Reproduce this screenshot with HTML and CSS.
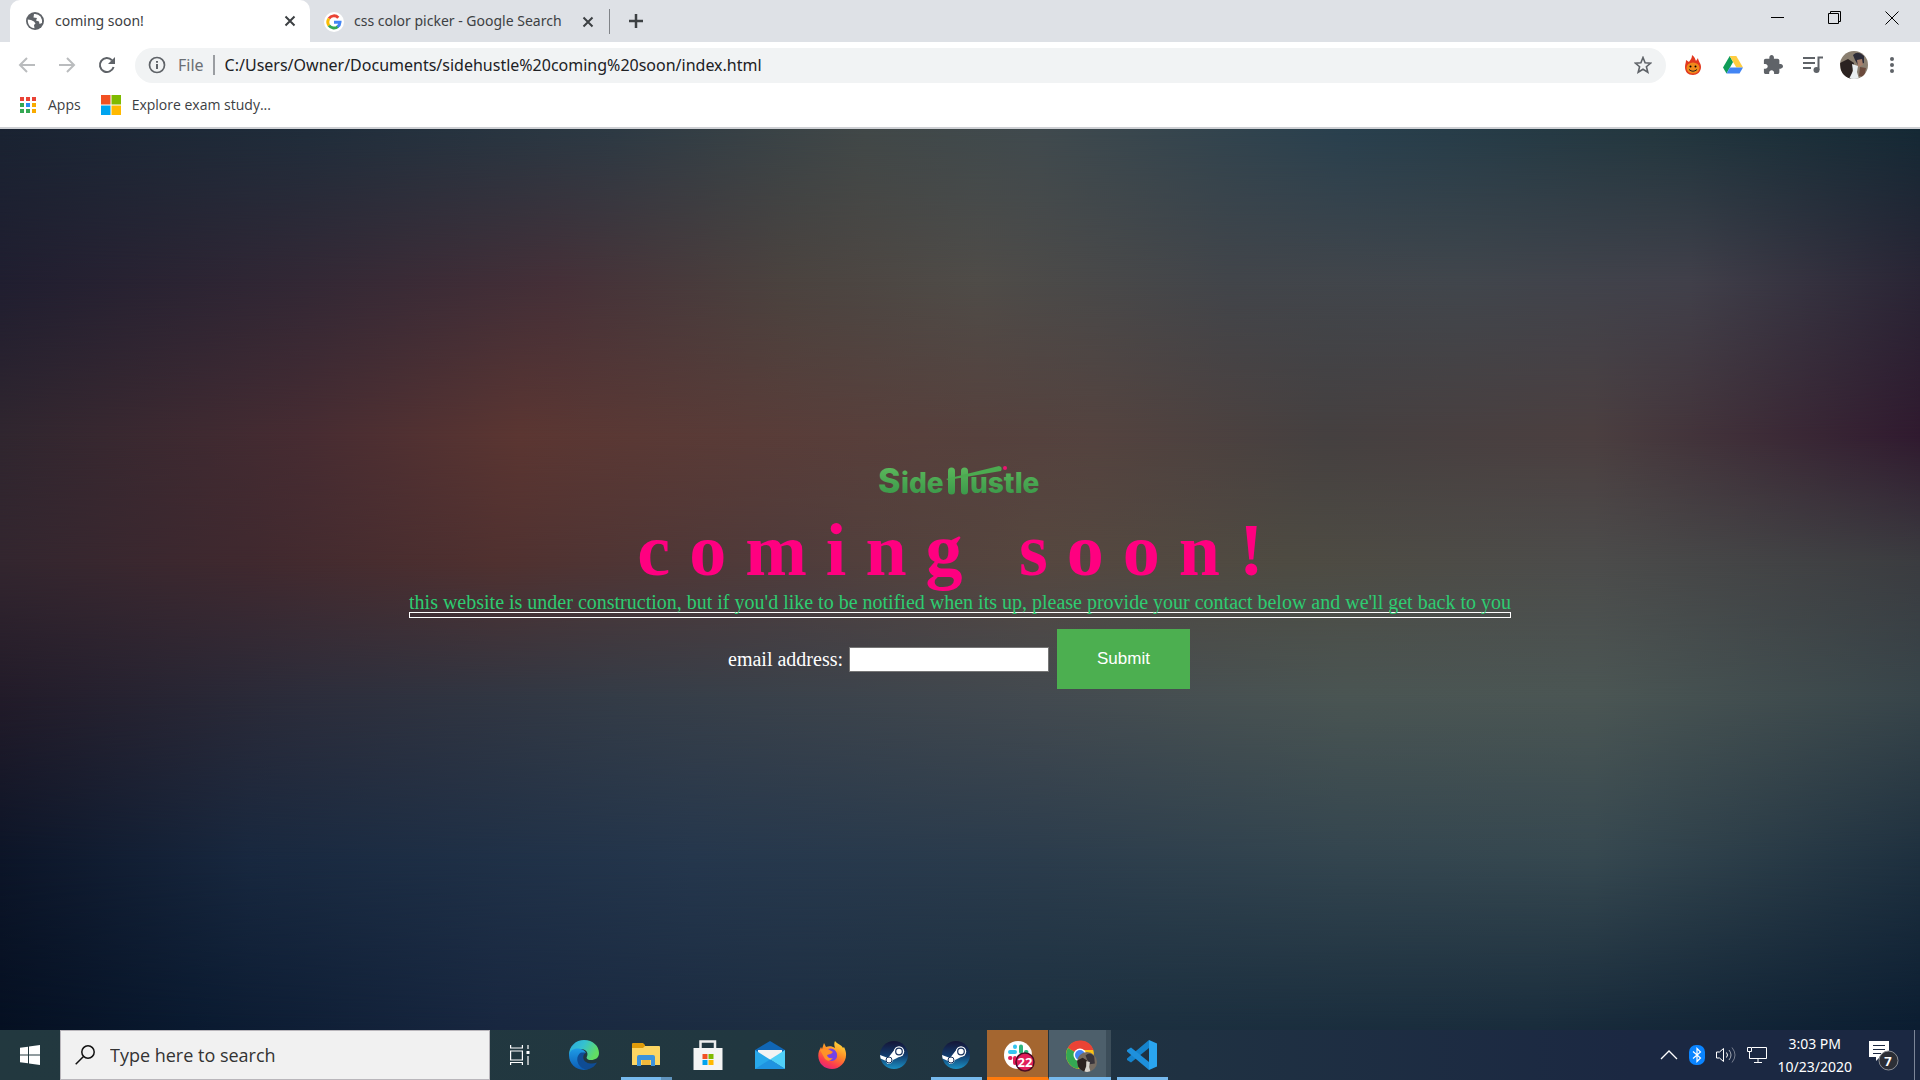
FILE: index.html
```html
<!DOCTYPE html>
<html lang="en">
<head>
<meta charset="utf-8">
<title>coming soon!</title>
<link rel="stylesheet" href="styles.css">
</head>
<body>
<header class="browser">
  <div class="tabstrip">
    <div class="tab tab-active">
      <svg class="icon" width="20" height="20" viewBox="0 0 20 20"><circle cx="10" cy="10" r="9" fill="#5f6368"/><path d="M2.800 8.500 L6 9 L9 10.500 L10.500 12.500 L9 14 L9.500 17.300 C5.500 17 2.500 13.500 2.800 8.500 Z M9 3 Q13 2.500 15.500 5.500 Q17.500 8.500 17 12 L14.500 13 L14 10.500 L11 9.500 L12 7 L8.500 6.500 Z" fill="#fff"/></svg>
      <span class="tab-title">coming soon!</span>
      <button class="plain" aria-label="Close tab"><svg width="12" height="12" viewBox="0 0 12 12"><path d="M1.500 1.500 L10.500 10.500 M10.500 1.500 L1.500 10.500" stroke="#3c4043" stroke-width="2"/></svg></button>
    </div>
    <div class="tab tab-idle">
      <svg class="icon" width="20" height="20" viewBox="0 0 20 20"><circle cx="10" cy="10" r="10" fill="#fff"/><g fill="none" stroke-width="3"><path d="M5 6.500 A6 6 0 0 1 14.300 5.700" stroke="#ea4335"/><path d="M5 13.500 A6 6 0 0 1 5 6.500" stroke="#fbbc05"/><path d="M14 14.500 A6 6 0 0 1 5 13.500" stroke="#34a853"/><path d="M10 10.200 H16 A6 6 0 0 1 13.500 14.800" stroke="#4285f4"/></g></svg>
      <span class="tab-title">css color picker - Google Search</span>
      <button class="plain" aria-label="Close tab"><svg width="12" height="12" viewBox="0 0 12 12"><path d="M1.500 1.500 L10.500 10.500 M10.500 1.500 L1.500 10.500" stroke="#3c4043" stroke-width="2"/></svg></button>
    </div>
    <button class="plain new-tab" aria-label="New tab"><svg width="16" height="16" viewBox="0 0 16 16"><path d="M8 1 V15 M1 8 H15" stroke="#3c4043" stroke-width="2.500"/></svg></button>
    <div class="window-controls">
      <button class="plain" aria-label="Minimize"><svg width="14" height="14" viewBox="0 0 14 14"><path d="M0 6.500 H13" stroke="#000"/></svg></button>
      <button class="plain" aria-label="Restore"><svg width="14" height="14" viewBox="0 0 14 14"><path d="M.5 2.500 H10.500 V12.500 H.5 Z M2.500 2.500 V.5 H12.500 V10.500 H10.500" fill="none" stroke="#000"/></svg></button>
      <button class="plain" aria-label="Close"><svg width="14" height="14" viewBox="0 0 14 14"><path d="M.5 .5 L13.500 13.500 M13.500 .5 L.5 13.500" stroke="#000"/></svg></button>
    </div>
  </div>
  <div class="toolbar">
    <nav class="nav">
      <button class="plain" aria-label="Back"><svg width="18" height="18" viewBox="0 0 18 18"><path d="M17 9 H2 M9 2 L2 9 L9 16" fill="none" stroke="#babcbe" stroke-width="2"/></svg></button>
      <button class="plain" aria-label="Forward"><svg width="18" height="18" viewBox="0 0 18 18"><path d="M1 9 H16 M9 2 L16 9 L9 16" fill="none" stroke="#babcbe" stroke-width="2"/></svg></button>
      <button class="plain" aria-label="Reload"><svg width="18" height="18" viewBox="0 0 18 18"><path d="M15.600 11 A7 7 0 1 1 14 4.200" fill="none" stroke="#5f6368" stroke-width="2"/><path d="M17 1 V8 H10 Z" fill="#5f6368"/></svg></button>
    </nav>
    <div class="omnibox">
      <svg width="18" height="18" viewBox="0 0 18 18"><circle cx="9" cy="9" r="7.500" fill="none" stroke="#5f6368" stroke-width="1.700"/><path d="M9 8 V13 M9 5 V6.800" stroke="#5f6368" stroke-width="2"/></svg>
      <span class="scheme">File</span>
      <input class="url" aria-label="Address" value="C:/Users/Owner/Documents/sidehustle%20coming%20soon/index.html">
      <button class="plain" aria-label="Bookmark this page"><svg width="18" height="18" viewBox="0 0 18 18"><path d="M9 1.500 L11.100 6.700 L16.700 7.100 L12.400 10.700 L13.800 16.200 L9 13.200 L4.200 16.200 L5.600 10.700 L1.300 7.100 L6.900 6.700 Z" fill="none" stroke="#5f6368" stroke-width="1.600"/></svg></button>
    </div>
    <div class="extensions">
      <button class="plain" aria-label="Flame extension"><svg width="20" height="20" viewBox="0 0 20 20"><path d="M9 0 C12 2 12 4 13 6 L15 3 C15 6 18 8 18 12 C18 17 14 20 10 20 C5 20 2 17 2 12 C2 9 3 8 3 5 L6 7 C7 5 9 4 9 0 Z" fill="#e2381f"/><ellipse cx="10" cy="13" rx="6.500" ry="5.500" fill="#f08a1c"/><circle cx="7.500" cy="11.500" r="1"/><circle cx="12.500" cy="11.500" r="1"/><path d="M6 14.500 Q10 18 14 14.500" fill="none" stroke="#222"/></svg></button>
      <button class="plain" aria-label="Drive"><svg width="20" height="20" viewBox="0 0 20 20"><path d="M6.700 1 L0 12.500 L3.500 18.500 L10.100 7 Z" fill="#0f9d58"/><path d="M6.700 1 H13.300 L20 12.500 H13.300 Z" fill="#ffcd40"/><path d="M6.900 12.500 H20 L16.500 18.500 H3.500 Z" fill="#4285f4"/></svg></button>
      <button class="plain" aria-label="Extensions"><svg width="20" height="20" viewBox="1 1 22 22"><path fill="#5f6368" d="M20.500 11H19V7c0-1.100-.9-2-2-2h-4V3.500C13 2.120 11.880 1 10.500 1S8 2.120 8 3.500V5H4c-1.100 0-2 .9-2 2v3.800h1.500c1.500 0 2.700 1.200 2.700 2.700S5 16.200 3.500 16.200H2V20c0 1.100.9 2 2 2h3.800v-1.500c0-1.500 1.200-2.700 2.700-2.700s2.700 1.200 2.700 2.700V22H17c1.100 0 2-.9 2-2v-4h1.500c1.380 0 2.500-1.120 2.500-2.500S21.880 11 20.500 11z"/></svg></button>
      <button class="plain" aria-label="Media"><svg width="20" height="20" viewBox="0 0 20 20"><path d="M0 3 H12 M0 8 H12 M0 13 H8" stroke="#5f6368" stroke-width="2"/><path d="M15.500 15 V2.500 H20" fill="none" stroke="#5f6368" stroke-width="2"/><circle cx="13.500" cy="15" r="3" fill="#5f6368"/></svg></button>
      <button class="plain avatar" aria-label="Profile"><svg width="28" height="28" viewBox="0 0 28 28"><defs><clipPath id="face"><circle cx="14" cy="14" r="14"/></clipPath></defs><g clip-path="url(#face)"><path d="M0 0 H28 V28 H0 Z" fill="#8a7f70"/><path d="M0 12 L8 8 L14 12 L11 28 H2 Z" fill="#2b2220"/><path d="M13 4 Q18 -1 24 5 L24 12 L18 14 L15 9 Z" fill="#2c2c38"/><path d="M17 9 L22 8 L23 14 L18 16 Z" fill="#a67f6b"/><path d="M12 13 L18 15 L17 21 L19 28 H9 L13 20 Z" fill="#e9eef0"/><path d="M20 16 L26 17 L24 26 L19 25 Z" fill="#6b4a3c"/></g></svg></button>
      <button class="plain" aria-label="Menu"><svg width="20" height="20" viewBox="0 0 20 20" fill="#5f6368"><circle cx="10" cy="4" r="2"/><circle cx="10" cy="10" r="2"/><circle cx="10" cy="16" r="2"/></svg></button>
    </div>
  </div>
  <nav class="bookmarks">
    <a class="bookmark" href="#apps"><svg width="18" height="18" viewBox="0 0 18 18"><path d="M1 1h4v4H1zM7 1h4v4H7zM13 1h4v4h-4z" fill="#ea4335"/><path d="M1 7h4v4H1zM1 13h4v4H1zM7 13h4v4H7z" fill="#34a853"/><path d="M7 7h4v4H7z" fill="#2a8cf4"/><path d="M13 7h4v4h-4zM13 13h4v4h-4z" fill="#f9ab00"/></svg>Apps</a>
    <a class="bookmark" href="#exam"><svg width="20" height="20" viewBox="0 0 20 20"><path d="M0 0h9.500v9.500H0z" fill="#f25022"/><path d="M10.500 0H20v9.500h-9.500z" fill="#7fba00"/><path d="M0 10.500h9.500V20H0z" fill="#00a4ef"/><path d="M10.500 10.500H20V20h-9.500z" fill="#ffb900"/></svg>Explore exam study...</a>
  </nav>
</header>

<main class="page">
  <div class="backdrop" aria-hidden="true">
    <i class="band band-1"></i><i class="band band-2"></i><i class="band band-3"></i><i class="band band-4"></i><i class="band band-5"></i><i class="band band-6"></i><i class="band band-7"></i>
  </div>
  <svg class="logo" width="164" height="32" viewBox="0 0 164 32" role="img" aria-label="SideHustle">
    <defs><linearGradient id="leaf" gradientUnits="userSpaceOnUse" x1="0" y1="2" x2="0" y2="30"><stop offset="0" stop-color="#5cb85c"/><stop offset="1" stop-color="#3c9a4a"/></linearGradient></defs>
    <g fill="url(#leaf)" class="logo-text"><text class="logo-cap" x="0" y="29">S</text><text x="23" y="29">ide</text><text x="92" y="29">ustle</text></g>
    <g stroke="url(#leaf)" stroke-linecap="round"><path d="M73.500 7 V27 M86.500 6.900 V27.100" stroke-width="7" fill="none"/></g>
    <path d="M68 15 L121 2 Q125 3 123 7 L70 16 Z" fill="#4cab50"/>
    <circle cx="127" cy="4" r="2" fill="#ec1470"/>
  </svg>
  <h1 class="headline">coming soon!</h1>
  <p class="notice">this website is under construction, but if you'd like to be notified when its up, please provide your contact below and we'll get back to you</p>
  <form class="signup">
    <label for="email">email address:</label>
    <input class="email" id="email" type="text">
    <button class="submit" type="button">Submit</button>
  </form>
</main>

<footer class="taskbar">
  <button class="plain start" aria-label="Start"><svg width="20" height="20" viewBox="0 0 20 20" fill="#fff"><path d="M0 2.800 L8 1.700 V9.500 H0 Z M9 1.500 L20 0 V9.500 H9 Z M0 10.500 H8 V18.300 L0 17.200 Z M9 10.500 H20 V20 L9 18.500 Z"/></svg></button>
  <label class="search">
    <svg width="20" height="20" viewBox="0 0 20 20"><circle cx="13" cy="7" r="6.200" fill="none" stroke="#111" stroke-width="1.500"/><path d="M8.500 11.500 L.7 19.300" stroke="#111" stroke-width="1.500"/></svg>
    <input class="search-input" type="text" aria-label="Search" placeholder="Type here to search">
  </label>
  <button class="plain task-view" aria-label="Task view"><svg width="20" height="20" viewBox="0 0 20 20" fill="none" stroke="#fff" stroke-width="1.200"><path d="M.6 0 V3 H12.400 V0 M.6 6 H12.400 V15 H.6 Z M.6 20 V17.500 H12.400 V20 M18 0 V4 M18 11 V20"/><path d="M16.500 6 h3 v3 h-3 z" fill="#fff" stroke="none"/></svg></button>
  <div class="apps">
    <button class="app" aria-label="Edge"><svg width="30" height="30" viewBox="0 0 30 30"><defs><linearGradient id="e1" x1="0" y1="0" x2="1" y2=".4"><stop offset="0" stop-color="#2aa7dc"/><stop offset=".5" stop-color="#35c1d0"/><stop offset="1" stop-color="#62dd62"/></linearGradient><linearGradient id="e2" x1="0" y1="0" x2="0" y2="1"><stop offset="0" stop-color="#1e9be6"/><stop offset="1" stop-color="#0c5cb5"/></linearGradient></defs><path d="M0 15 C0 6 7 0 15 0 C24 0 30 6 30 13 C30 18 26 20 22 20 C18 20 17 18 18 16.500 C20 12 16 9 12 9 C6 9 1 12 0 17 Z" fill="url(#e1)"/><path d="M0 15 C1 10 5 8 10 8.500 C14 9 16 11 17 13 C13 12 10 14 10 18 C10 24 15 28 21 28.500 C11 33 0 26 0 15 Z" fill="url(#e2)"/><path d="M12 12.500 C8 15 7 20 10 25 C14 31 23 31 28 22.500 C22 25 16 23 14.500 19 C13.700 16 15 13.500 17 13 Z" fill="#0f4c94"/></svg></button>
    <button class="app running grouped" aria-label="File Explorer"><svg width="30" height="30" viewBox="0 0 30 30"><path d="M1 4 Q1 3 2 3 H12 L14 5 V9 H1 Z" fill="#e09c0a"/><path d="M1 8 H12 L14 6 H28 Q29 6 29 7 V25 H1 Z" fill="#fdd663"/><path d="M6 26 V17 Q6 15 8 15 H22 Q24 15 24 17 V26 H20 V20 H10 V26 Z" fill="#3d93dc"/><path d="M11 20 h8 v5 h-8 z" fill="#f1b93c"/></svg></button>
    <button class="app" aria-label="Store"><svg width="30" height="30" viewBox="0 0 30 30"><path d="M7.500 10 V1.500 H22 V10" fill="none" stroke="#eee" stroke-width="2.500"/><path d="M.5 8 H29.500 V30 H.5 Z" fill="#f4f4f4"/><path d="M9.500 14h5v5h-5z" fill="#f25022"/><path d="M15.500 14h5v5h-5z" fill="#7fba00"/><path d="M9.500 20h5v5h-5z" fill="#00a4ef"/><path d="M15.500 20h5v5h-5z" fill="#ffb900"/></svg></button>
    <button class="app" aria-label="Mail"><svg width="30" height="30" viewBox="0 0 30 30"><path d="M0 10 L15 1 L30 10 V16 H0 Z" fill="#1066b5"/><path d="M3 10 H27 V20 H3 Z" fill="#f3f3f3"/><path d="M0 10 L30 29 H0 Z" fill="#28a8ea"/><path d="M30 10 L15 19.500 L30 29 Z" fill="#50d0f8"/><path d="M0 29 L15 19.500 L30 29 Z" fill="#1f93e0"/></svg></button>
    <button class="app" aria-label="Firefox"><svg width="30" height="30" viewBox="0 0 30 30"><defs><linearGradient id="fx" x1=".8" y1="0" x2=".3" y2="1"><stop offset="0" stop-color="#ffe03c"/><stop offset=".45" stop-color="#ff8a26"/><stop offset=".8" stop-color="#fb3a4f"/><stop offset="1" stop-color="#e0257c"/></linearGradient></defs><path d="M18 1 C20 4 25 5 26 8 L27 7 C33 18 25 29 15 29 C6 29 -1 21 2 11 L4 7 L5 9 L7 3 L9 7 C12 6 15 6 18 8 C17 5 17 3 18 1 Z" fill="url(#fx)"/><path d="M11 9 C16 7 21 11 20 17 C18 23 9 22 8.500 15 L14 14 L16 12 Z" fill="#7542e5"/><path d="M3 10 Q8 7 15 12 Q13 14 10 15 Q11 19 16 18 Q12 23 8 19 Z" fill="#ff9328"/></svg></button>
    <button class="app" aria-label="Steam"><svg width="30" height="30" viewBox="0 0 30 30"><defs><linearGradient id="st" x1="0" y1="0" x2="0" y2="1"><stop offset="0" stop-color="#151536"/><stop offset=".5" stop-color="#123a6b"/><stop offset="1" stop-color="#1a90c4"/></linearGradient><g id="steam"><circle cx="15" cy="15" r="14" fill="url(#st)"/><path d="M1 15 L9 18 L16 9 L24 15 L14 20 Q12 25 8 23.500 L7 21 L1.600 18.500 Z" fill="#fff"/><circle cx="20" cy="11.500" r="5.200" fill="#fff"/><circle cx="20" cy="11.500" r="3.300" fill="#fff" stroke="#17305c" stroke-width="1.200"/><circle cx="10" cy="20" r="3" fill="#fff" stroke="#17305c"/></g></defs><use href="#steam"/></svg></button>
    <button class="app running" aria-label="Steam"><svg width="30" height="30" viewBox="0 0 30 30"><use href="#steam"/></svg></button>
    <button class="app running alert" aria-label="Slack"><svg width="34" height="34" viewBox="0 0 34 34"><circle cx="15" cy="15" r="14" fill="#fff"/><g stroke-width="4" stroke-linecap="round"><path d="M7 12 H12 M12 6.500 V7" stroke="#36c5f0"/><path d="M18 6.500 V12 M23 12 H23.500" stroke="#2eb67d"/><path d="M7 18 H7.500 M12 18 V23" stroke="#e01e5a"/><path d="M18 18 H23" stroke="#ecb22e"/></g><circle cx="22" cy="22" r="9" fill="#e01e5a" stroke="#4a0d22" stroke-width="1.500"/><text class="count" x="22" y="27">22</text></svg></button>
    <button class="app running current" aria-label="Chrome"><svg width="34" height="34" viewBox="0 0 34 34"><circle cx="15" cy="15" r="14" fill="#fbc116"/><path d="M15 15 L2.900 8 A14 14 0 0 1 28.500 10 H15 Z" fill="#ea4335"/><path d="M15 15 L2.900 8 A14 14 0 0 0 13 28.800 L18 20 Z" fill="#34a853"/><circle cx="15" cy="15" r="6.500" fill="#fff"/><circle cx="15" cy="15" r="5" fill="#4285f4"/><svg x="12" y="12" width="20" height="20" viewBox="0 0 28 28"><g clip-path="url(#face)"><path d="M0 0 H28 V28 H0 Z" fill="#756b60"/><path d="M0 12 L8 8 L14 12 L11 28 H2 Z" fill="#2b2220"/><path d="M12 5 Q18 -1 24 6 L25 16 L18 17 L14 10 Z" fill="#38343a"/><path d="M13 13 L18 14 L17 21 L19 28 H10 L13 20 Z" fill="#d9d5cf"/></g></svg></svg></button>
    <button class="app running" aria-label="Visual Studio Code"><svg width="30" height="30" viewBox="0 0 30 30"><path d="M22 0 L30 3.500 V26.500 L22 30 Z" fill="#2aa5f0"/><path d="M22 0 V8 L4 22.500 L0 20 V18.500 Z" fill="#1583cc"/><path d="M0 10 L4 7.500 L22 22 V30 L0 11.500 Z" fill="#1e90dc"/></svg></button>
  </div>
  <div class="tray">
    <svg width="18" height="10" viewBox="0 0 18 10"><path d="M1 9 L9 1 L17 9" fill="none" stroke="#fff" stroke-width="1.300"/></svg>
    <svg width="16" height="20" viewBox="0 0 16 20"><rect width="16" height="20" rx="7" fill="#0a84ff"/><path d="M4 6.500 L11.500 13 L8 16.500 V3.500 L11.500 7 L4 13.500" fill="none" stroke="#fff" stroke-width="1.200"/></svg>
    <svg width="20" height="18" viewBox="0 0 20 18" fill="none" stroke="#fff"><path d="M.5 6 H3.500 L7.500 2.500 V15.500 L3.500 12 H.5 Z"/><path d="M10.500 6.500 Q12.500 9 10.500 11.500"/><path d="M13 4 Q17 9 13 14" opacity=".6"/><path d="M16 1.500 Q22 9 16 16.500" opacity=".4"/></svg>
    <svg width="20" height="18" viewBox="0 0 20 18" fill="none" stroke="#fff"><path d="M5 1.500 H19.500 V12.500 H2.500 V6 M.5 1.500 H4.500 V5.500 H.5 Z M11 12.500 V16.500 M7 16.500 H15"/></svg>
    <time class="clock"><span>3:03 PM</span><span>10/23/2020</span></time>
    <svg class="notes" width="30" height="32" viewBox="0 0 30 32"><path d="M0 2 H20 V18 H11 L7 22 V18 H0 Z" fill="#fff"/><path d="M4 6.500 H16 M4 10.500 H16 M4 14.500 H12" stroke="#1b2842"/><circle cx="19.500" cy="21.500" r="9.500" fill="#2c2f36" stroke="#8a8d93"/><text class="count" x="19" y="27">7</text></svg>
  </div>
</footer>
</body>
</html>
```
FILE: styles.css
```css
* { box-sizing: border-box; }

body {
  margin: 0;
  min-height: 100vh;
  display: flex;
  flex-direction: column;
  font-family: "Open Sans", "Noto Sans", sans-serif;
  color: #3c4043;
}

svg { display: block; flex: none; }

.plain {
  display: flex;
  align-items: center;
  justify-content: center;
  padding: 0;
  border: 0;
  background: none;
}

/* Browser frame */
.browser { background: #fff; border-bottom: 2px solid #ced0d4; }

.tabstrip {
  display: flex;
  height: 42px;
  padding-left: 10px;
  background: #dee1e6;
}

.tab { display: flex; align-items: center; font: 14px "Noto Sans", sans-serif; }
.tab-title { flex: 1; padding: 0 0 2px 10px; white-space: nowrap; }
.tab-active {
  width: 300px;
  padding: 0 14px 0 15px;
  background: #fff;
  border-radius: 10px 10px 0 0;
}
.tab-idle {
  width: 300px;
  margin: 9px 0 8px;
  padding: 0 15px 0 14px;
  border-right: 1px solid #808388;
}
.new-tab { width: 52px; }

.window-controls { display: flex; margin-left: auto; height: 36px; }
.window-controls button { width: 57px; }

.toolbar { display: flex; align-items: center; height: 46px; padding: 0 18px; }
.nav { display: flex; gap: 22px; margin-right: 19px; }

.omnibox {
  flex: 1;
  display: flex;
  align-items: center;
  height: 35px;
  padding: 0 14px 0 13px;
  border-radius: 18px;
  background: #f1f3f4;
  font: 16px "Noto Sans", sans-serif;
}
.scheme {
  margin: 0 10px 0 12px;
  padding-right: 9px;
  border-right: 2px solid #9a9da1;
  line-height: 20px;
  color: #6b6f74;
}
.url {
  flex: 1;
  padding: 0;
  border: 0;
  background: none;
  font: inherit;
  color: #202124;
}

.extensions { display: flex; align-items: center; gap: 20px; padding-left: 17px; }
.avatar { margin: 0 -6px 0 -3px; }

.bookmarks { display: flex; align-items: center; gap: 20px; height: 39px; padding: 0 19px 6px; }
.bookmark {
  display: flex;
  align-items: center;
  gap: 11px;
  font-size: 14px;
  color: #3c4043;
  text-decoration: none;
}

/* Landing page */
.page {
  flex: 1;
  position: relative;
  isolation: isolate;
  display: flex;
  flex-direction: column;
  align-items: center;
  justify-content: center;
  padding-bottom: 6px;
  font: 20px/20px "Liberation Serif", "Times New Roman", serif;
  color: #fff;
}

/* Each band fades in over the one above it, which makes a soft two-way blend */
.backdrop { position: absolute; inset: 0; z-index: -1; overflow: hidden; }
.band { position: absolute; inset: 0; }
.band-1 { background: linear-gradient(90deg, #1a2332, #202d3b 16%, #2d3a44 32%, #414848 45%, #404a4e 54%, #29404e 70%, #23373f 86%, #152935); }
.band-2 {
  background: linear-gradient(90deg, #201e30, #332835 16%, #453038 29%, #4b433f 41%, #4f4c48 51%, #42454a 64%, #41464c 76%, #41404a 88%, #2a2535);
  mask-image: linear-gradient(transparent 0%, #000 17%);
}
.band-3 {
  background: linear-gradient(90deg, #30262f, #472c32 16%, #5b3632 27%, #583f3b 45%, #54433f 57%, #454040 69%, #4b3f40 83%, #301a2f);
  mask-image: linear-gradient(transparent 17%, #000 34%);
}
.band-4 {
  background: linear-gradient(90deg, #33262f, #40292f 13%, #503130 26%, #503c3b 41%, #56473f 54%, #4e4b42 67%, #4c4c4b 83%, #3b3c40);
  mask-image: linear-gradient(transparent 34%, #000 48%);
}
.band-5 {
  background: linear-gradient(90deg, #221b29, #2c2d3b 16%, #343c47 32%, #434a50 54%, #4a5553 70%, #4b5654 83%, #38454a);
  mask-image: linear-gradient(transparent 48%, #000 63%);
}
.band-6 {
  background: linear-gradient(90deg, #0c1528, #18283f 13%, #25374d 36%, #2b3c4c 54%, #33454f 70%, #364850 83%, #1e303f);
  mask-image: linear-gradient(transparent 63%, #000 81%);
}
.band-7 {
  background: linear-gradient(90deg, #051022, #0a1a30 10%, #182740 26%, #1d2e42 41%, #1c3040 54%, #192c3c 80%, #0b1d31);
  mask-image: linear-gradient(transparent 81%, #000 100%);
}

.logo { overflow: visible; }
.logo-text { font: 800 28px Inter, sans-serif; }
.logo-cap { font-size: 34px; }

.headline {
  margin: 12px 0 0;
  font-size: 74px;
  line-height: 84px;
  letter-spacing: 19px;
  color: #ff0080;
}

.notice { margin: 0; color: #2ecc71; }
.notice::after {
  content: "";
  display: block;
  height: 4px;
  border: 1px solid #fff;
}

.signup { display: flex; align-items: center; margin: 11px 2px 0 0; }
.email {
  width: 200px;
  height: 25px;
  margin: 0 8px 0 6px;
  border: 1px solid #767676;
  background: #fff;
}
.submit {
  height: 60px;
  padding: 0 40px;
  border: 0;
  background: #4caf50;
  font: 17px "Liberation Sans", Arial, sans-serif;
  color: #fff;
}

/* Taskbar */
.taskbar {
  display: flex;
  height: 50px;
  background: linear-gradient(90deg, #22383f, #213740 40%, #1f3142 62%, #1b2842 85%);
  color: #fff;
}
.start { width: 60px; }
.search {
  display: flex;
  align-items: center;
  gap: 15px;
  width: 430px;
  padding: 0 14px;
  border: 1px solid #b9b6bb;
  background: #f1f1f1;
}
.search-input {
  flex: 1;
  padding: 0;
  border: 0;
  background: none;
  font: 18px "Open Sans", sans-serif;
}
.search-input::placeholder { color: #333; opacity: 1; }
.task-view { width: 60px; }

.apps { display: flex; padding-left: 3px; }
.app {
  display: flex;
  align-items: center;
  justify-content: center;
  width: 62px;
  padding: 0;
  border: 0;
  background: none;
}
.running {
  background: linear-gradient(#76b9ed, #76b9ed) center bottom / 51px 3px no-repeat;
}
.grouped {
  background-image: linear-gradient(90deg, #76b9ed 40px, #5f93bd 40px);
}
.alert, .current { padding: 6px 0 0 4px; }
.alert { background: #a46630; border-bottom: 3px solid #ff7a0c; border-right: 1px solid #22333f; }
.current {
  background: linear-gradient(90deg, #4d5f6b 57px, #3c4d59 57px);
  border-bottom: 3px solid #76b9ed;
}

.tray {
  display: flex;
  align-items: center;
  gap: 11px;
  margin: 0 5px 0 auto;
  padding-right: 15px;
  border-right: 1px solid #7d8698;
}
.clock {
  display: flex;
  flex-direction: column;
  align-items: center;
  font: 14px/23px "Noto Sans", sans-serif;
}
.notes { margin-left: 6px; }
.count {
  font: bold 13px "Open Sans", sans-serif;
  fill: #fff;
  text-anchor: middle;
}
```
